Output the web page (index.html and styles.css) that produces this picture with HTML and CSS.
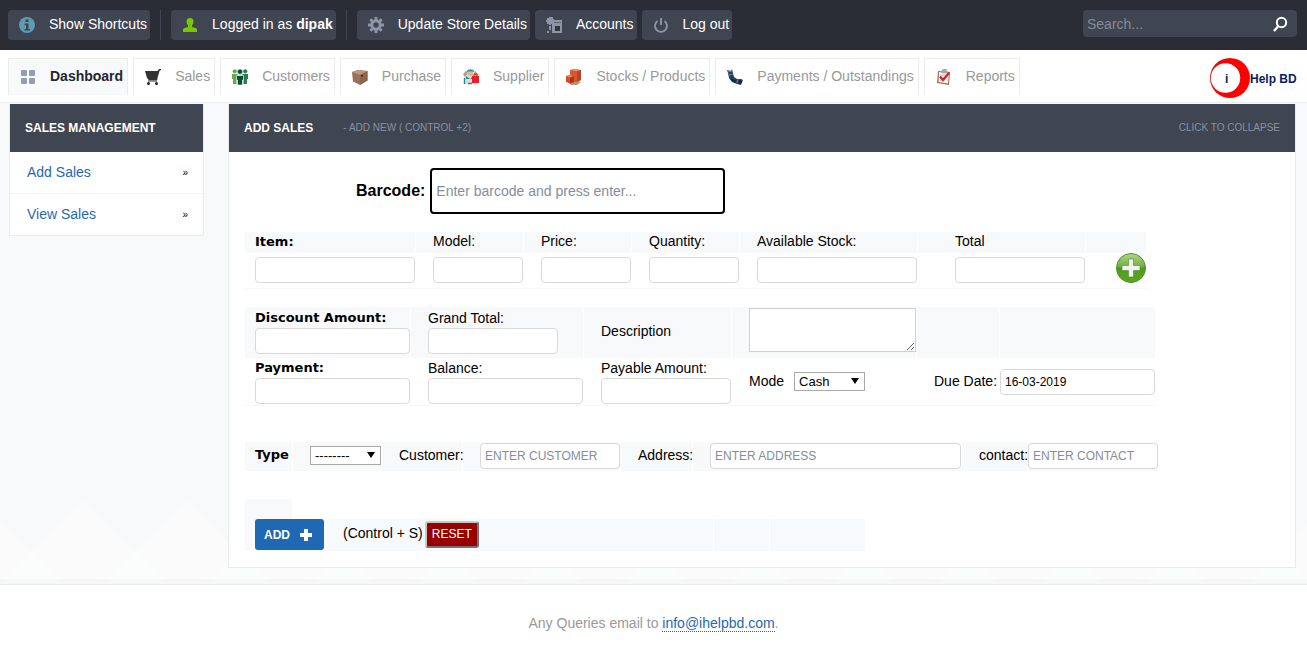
FILE: index.html
```html
<!DOCTYPE html>
<html lang="en">
<head>
<meta charset="utf-8">
<title>Add Sales</title>
<link rel="stylesheet" href="styles.css">
</head>
<body>
<header class="topbar">
  <a class="top-btn" href="#"><svg class="ico" viewBox="0 0 16 16"><circle cx="8" cy="8" r="8" fill="#5d9bb0"/><path d="M6.500 2.500h3v2.500h-3zM5.500 6.500h4V12H11v1.500H5.500V12H7V8H5.500z" fill="#3f4551"/></svg>Show Shortcuts</a>
  <span class="sep"></span>
  <a class="top-btn" href="#"><svg class="ico" viewBox="0 0 16 16"><path d="M8 1c2.200 0 3.700 1.500 3.500 3.700C11.400 6.500 10.500 7.600 10 8.300V10l3.500.9c1 .4 1.500 1 1.500 2V15H1v-2.100c0-1 .5-1.600 1.500-2L6 10V8.300C5.500 7.600 4.600 6.500 4.500 4.700 4.300 2.500 5.800 1 8 1z" fill="#7ac600"/></svg><span>Logged in as <b>dipak</b></span></a>
  <span class="sep"></span>
  <a class="top-btn" href="#"><svg class="ico" viewBox="0 0 16 16"><circle cx="8" cy="8" r="4.200" fill="none" stroke="#8d94a6" stroke-width="3"/><path d="M8 0v3.500M8 12.500V16M0 8h3.500M12.500 8H16M2.300 2.300l2.500 2.500M11.200 11.200l2.500 2.500M2.300 13.700l2.500-2.500M11.200 4.800l2.500-2.500" stroke="#8d94a6" stroke-width="3"/></svg>Update Store Details</a>
  <a class="top-btn" href="#"><svg class="ico" viewBox="0 0 16 16"><path d="M1 1h2V0h4v2h1v3l-2 2H5v1H3V7H1V5H0V3h1zM1 14h2v2H1zM3 9h2v4H3z" fill="#8d94a6"/><path d="M6 3h10v13H6z" fill="#8d94a6"/><path d="M8 5h7v1H8z" fill="#626878"/><path d="M9 9h5v5H9z" fill="#31353f"/></svg>Accounts</a>
  <a class="top-btn" href="#"><svg class="ico" viewBox="0 0 16 16"><path d="M4.500 4A6 6 0 1 0 11.500 4M8 1v7" fill="none" stroke="#8d94a6" stroke-width="1.900"/></svg>Log out</a>
  <form class="search">
    <input type="search" placeholder="Search..." aria-label="Search">
    <button type="button" aria-label="Run search"><svg class="ico" viewBox="0 0 16 16"><circle cx="9.500" cy="6.500" r="4.700" fill="none" stroke="#fff" stroke-width="2"/><path d="M6 10.500L2 15" stroke="#fff" stroke-width="2.400"/></svg></button>
  </form>
</header>

<nav class="mainnav">
  <a class="tab active" href="#"><svg class="ico" viewBox="0 0 16 16" fill="#969db0"><rect x="1" y="1" width="6" height="6" rx="1"/><rect x="9" y="1" width="6" height="6" rx="1"/><rect x="1" y="9" width="6" height="6" rx="1"/><rect x="9" y="9" width="6" height="6" rx="1"/></svg>Dashboard</a>
  <a class="tab" href="#"><svg class="ico" viewBox="0 0 16 16"><path d="M0 2h12.500L14 0h2v1.200h-1.200L12.500 9l-.3 2.200H3.500V10.500L2 9z" fill="#333"/><path d="M3 12h9" stroke="#333"/><circle cx="3.500" cy="14.500" r="1.500" fill="#222"/><circle cx="11.500" cy="14.500" r="1.500" fill="#222"/></svg>Sales</a>
  <a class="tab" href="#"><svg class="ico" viewBox="0 0 16 16"><g fill="#6aa84f"><circle cx="2.800" cy="2.300" r="2.100"/><path d="M0 5h5.500v5H4.500v5H1v-5H0z"/></g><g fill="#2f7d4c"><circle cx="13.200" cy="2.300" r="2.100"/><path d="M10.500 5H16v5h-1v5h-3.500v-5h-1z"/></g><g fill="#0b4f38" stroke="#fff" stroke-width=".6"><circle cx="8" cy="2.700" r="2.700"/><path d="M4.500 6.500h7V11h-1v5h-5v-5h-1z"/></g></svg>Customers</a>
  <a class="tab" href="#"><svg class="ico" viewBox="0 0 16 16"><path d="M0 3l6-2 9.500 1v9.500L8 16 1 12.500z" fill="#9b7259"/><path d="M0 3l6-2 9.500 1L8 6z" fill="#bf967a"/><path d="M8 6l7.500-4V11.500L8 16z" fill="#8c674f"/><path d="M9 6h2v1.500H9z" fill="#3d2419"/></svg>Purchase</a>
  <a class="tab" href="#"><svg class="ico" viewBox="0 0 16 16"><path d="M1 15V8l3-3h7l4 5v5z" fill="#e7d9c8"/><path d="M0 5l3-3 2 2-3 4zM12 2l3 3-1 3-3-3z" fill="#b79a84"/><circle cx="7.500" cy="4.500" r="2.800" fill="#e6b48d"/><path d="M3.500 3.500c0-4.500 8-4.500 8 0l-2-1h-4z" fill="#249aae"/><path d="M3 7l4 3 3-3 1 3H3z" fill="#238b9c"/><path d="M1.500 15V9M5 14.500h4" stroke="#238b9c" stroke-width="1.400"/><path d="M9 7h7v7H9z" fill="#e5202b"/><path d="M11 7V5h3v2" fill="none" stroke="#c5191e"/></svg>Supplier</a>
  <a class="tab" href="#"><svg class="ico" viewBox="0 0 16 16"><path d="M3 14l7-2 5 1-4 3H5z" fill="#b39a6a"/><path d="M4 1l5-1 6 1v10l-4 2H4z" fill="#d8552e"/><path d="M4 1l5-1 6 1-4 1.500z" fill="#f08c5c"/><path d="M11 2.500L15 1v10l-4 2z" fill="#b84526"/><path d="M0 7l4-1 4 1v6l-4 1.500L0 13z" fill="#d64b27"/><path d="M0 7l4-1 4 1-4 1.500z" fill="#f0885c"/><path d="M4 8.500L8 7v6l-4 1.500z" fill="#a93622"/></svg>Stocks / Products</a>
  <a class="tab" href="#"><svg class="ico" viewBox="0 0 16 16"><path d="M0 1l4 1 1-2 1 4 1 4 3 2 4 0 2 1-2 5-4-1-5-2-3-4-1-5z" fill="#263f5d"/><path d="M1 3l4-1M2 6l4-1M10 14l1-4" stroke="#8198b0" stroke-width=".8"/><path d="M4 9l5 3-1 2-4-3zM12 11l3 1-1 3-3-1z" fill="#15273e"/></svg>Payments / Outstandings</a>
  <a class="tab" href="#"><svg class="ico" viewBox="0 0 16 16"><path d="M2 2l12 1-1 13-12-2z" fill="#9b6e4c"/><path d="M3 3l10 1-1 10.500L2.500 13z" fill="#eef2f7"/><path d="M5 2l2-2h3l2 3-1 1.500-6-.5z" fill="#a8a8ad"/><path d="M4 6h7M4 9h6M4 11h5" stroke="#9db3c9" stroke-width=".7"/><path d="M4 7.500l3 3.500L13 4" fill="none" stroke="#d91f26" stroke-width="2.200"/></svg>Reports</a>
  <a class="logo" href="#" aria-label="i Help BD"><svg width="88" height="40" viewBox="0 0 88 40"><circle cx="20" cy="20" r="20" fill="#fe0000"/><circle cx="15.500" cy="20" r="14.700" fill="#fff"/><g class="logo-text"><text x="15" y="25">i</text><text x="40" y="25">Help BD</text></g></svg></a>
</nav>

<div class="stage">
  <svg class="pattern" aria-hidden="true"><defs><pattern id="peaks" x="31" y="0" width="104" height="84" patternUnits="userSpaceOnUse"><path d="M52 0l52 52v32H0V52z" fill="#fbfbfb"/><path d="M0 52l32 32H0zM104 52v32H72z" fill="#fbfdfc"/></pattern></defs><rect width="100%" height="84" fill="url(#peaks)"/><rect y="79" width="100%" height="5" fill="#000" fill-opacity=".018"/></svg>
  <aside class="side">
    <h2 class="panel-head">SALES MANAGEMENT</h2>
    <ul>
      <li><a href="#">Add Sales</a><span>»</span></li>
      <li><a href="#">View Sales</a><span>»</span></li>
    </ul>
  </aside>
  <main class="panel">
    <div class="panel-head"><h2>ADD SALES</h2><small>- ADD NEW ( CONTROL +2)</small><small class="collapse">CLICK TO COLLAPSE</small></div>
    <form class="panel-body">
      <div class="barcode"><label for="barcode">Barcode:</label><input id="barcode" placeholder="Enter barcode and press enter..."></div>

      <table class="items">
        <colgroup><col class="w171"><col class="w108"><col class="w108"><col class="w108"><col class="w178"><col class="w168"><col class="w60"></colgroup>
        <tr class="tint"><td><label class="strong" for="item">Item:</label></td><td><label for="model">Model:</label></td><td><label for="price">Price:</label></td><td><label for="qty">Quantity:</label></td><td><label for="stock">Available Stock:</label></td><td class="total"><label for="total">Total</label></td><td></td></tr>
        <tr class="line"><td><input id="item"></td><td><input id="model"></td><td><input id="price"></td><td><input id="qty"></td><td><input id="stock"></td><td class="total"><input id="total"></td><td class="plus-cell"><button class="plus" type="button" aria-label="Add item"><svg width="30" height="30" viewBox="0 0 30 30"><defs><linearGradient id="green" x2="0" y2="1"><stop offset="0" stop-color="#b4d68c"/><stop offset=".45" stop-color="#72ae43"/><stop offset=".5" stop-color="#4f9a22"/><stop offset="1" stop-color="#5ba71e"/></linearGradient></defs><circle cx="15" cy="15" r="14.500" fill="url(#green)" stroke="#4c8f2b"/><path d="M12.500 6h5v6.500H24v5h-6.500V24h-5v-6.500H6v-5h6.500z" fill="#f1f1f1" stroke="#4b8a2b" stroke-width=".6"/></svg></button></td></tr>
      </table>

      <table class="amounts">
        <colgroup><col class="w166"><col class="w173"><col class="w148"><col class="w185"><col class="w83"><col class="w155"></colgroup>
        <tr class="tint"><td><label class="strong" for="disc">Discount Amount:</label><input id="disc"></td><td><label for="grand">Grand Total:</label><input id="grand" class="w130"></td><td class="mid"><label for="desc">Description</label></td><td><textarea id="desc"></textarea></td><td></td><td></td></tr>
        <tr class="line"><td><label class="strong" for="pay">Payment:</label><input id="pay"></td><td><label for="bal">Balance:</label><input id="bal"></td><td><label for="payable">Payable Amount:</label><input id="payable"></td><td class="mid"><div class="mode"><label for="mode">Mode</label><span class="pick"><select id="mode"><option>Cash</option></select></span></div></td><td class="mid due"><label for="due">Due Date:</label></td><td class="mid flush"><input id="due" value="16-03-2019"></td></tr>
      </table>

      <table class="party">
        <colgroup><col class="w48"><col class="w89"><col class="w81"><col class="w158"><col class="w72"><col class="w269"><col class="w66"><col class="w130"></colgroup>
        <tr class="tint"><td><label class="strong" for="type">Type</label></td><td><span class="pick"><select id="type"><option>--------</option></select></span></td><td><label for="cust">Customer:</label></td><td><input id="cust" placeholder="ENTER CUSTOMER"></td><td><label for="addr">Address:</label></td><td><input id="addr" placeholder="ENTER ADDRESS"></td><td><label for="contact">contact:</label></td><td class="flush"><input id="contact" placeholder="ENTER CONTACT"></td></tr>
      </table>

      <div class="stub"></div>
      <table class="actions">
        <colgroup><col class="w81"><col class="w388"><col class="w56"><col class="w95"></colgroup>
        <tr class="tint"><td><button class="add" type="submit">ADD<svg width="12" height="12" viewBox="0 0 12 12"><path d="M4 0h4v4h4v4H8v4H4V8H0V4h4z" fill="#fff"/></svg></button></td><td><div class="reset-row">(Control + S)<button class="reset" type="reset">RESET</button></div></td><td></td><td></td></tr>
      </table>
    </form>
  </main>
</div>
<footer class="footer">Any Queries email to <a href="#">info@ihelpbd.com</a>.</footer>
</body>
</html>
```

FILE: styles.css
```css
* { box-sizing: border-box; }
body { margin: 0; background: #fff; color: #000; font: 14px/20px "Liberation Sans", Arial, sans-serif; }
a { text-decoration: none; color: #1f68b4; }
h2 { margin: 0; font-size: 12px; line-height: 20px; }
.ico { width: 16px; height: 16px; flex: none; }

.topbar { display: flex; align-items: flex-start; height: 50px; padding: 10px 10px 0 8px; background: #2a2d36; }
.top-btn { display: flex; align-items: center; height: 30px; margin-right: 5px; padding: 0 3px 2px 11px; border-radius: 4px; background: #3f4551; color: #fff; white-space: nowrap; }
.top-btn .ico { margin: 2px 14px 0 0; }
.sep { width: 1px; height: 30px; margin: 0 10px 0 5px; background: #3f4551; }
.search { display: flex; align-items: center; width: 214px; height: 27px; margin-left: auto; padding: 0 9px 0 4px; border-radius: 4px; background: #3f4551; }
.search input { flex: 1; min-width: 0; height: 25px; padding: 0; border: 0; background: none; color: #fff; font: inherit; }
.search input::placeholder { color: #858b99; }
.search button { display: flex; padding: 0; border: 0; background: none; }

.mainnav { display: flex; gap: 5px; align-items: flex-start; height: 53px; padding: 8px 9px 0 8px; border-bottom: 1px solid #e9eeec; }
.tab { display: flex; align-items: center; height: 37px; padding: 0 4px 2px 11px; border: 1px solid #ececec; border-bottom: 0; color: #999; white-space: nowrap; }
.tab .ico { margin: 2px 14px 0 0; }
.tab.active { background: #f7f9fb; color: #23262e; font-weight: bold; }
.logo { display: flex; margin-left: auto; }
.logo-text { fill: #0b1c62; font: bold 12px "Liberation Sans", Arial, sans-serif; }

.stage { position: relative; display: flex; align-items: flex-start; gap: 24px; padding: 1px 11px 16px 9px; border-bottom: 1px solid #e9eceb; background: #f7f9fb; }
.pattern { position: absolute; left: 0; bottom: 0; width: 100%; height: 84px; }
.side, .panel { position: relative; border: 1px solid #e9eced; border-top: 0; background: #fff; }
.side { width: 195px; flex: none; }
.panel { flex: 1; }
.panel-head { display: flex; align-items: center; height: 48px; padding: 0 15px; background: #3f4551; color: #fff; }
.panel-head small { margin-left: 30px; color: #8a91a0; font-size: 10px; }
.panel-head .collapse { margin-left: auto; }
.side ul { margin: 0; padding: 0; list-style: none; }
.side li { display: flex; justify-content: space-between; height: 42px; padding: 10px 15px 0 17px; border-bottom: 1px solid #f3f5f6; }
.side li:last-child { border-bottom: 0; height: 41px; }
.side li span { font-size: 10px; line-height: 22px; }

.panel-body { padding: 16px 16px; }
.barcode { display: flex; align-items: center; gap: 5px; padding-left: 111px; font-size: 16px; font-weight: bold; }
.panel-body input { display: block; width: 100%; height: 26px; padding: 0 4px; border: 1px solid #d9d9d9; border-radius: 4px; background: #fff; font: 12px "Liberation Sans", Arial, sans-serif; }
.panel-body input::placeholder { color: #858d9c; }
.panel-body .barcode input { width: 295px; height: 46px; border: 2px solid #000; font-size: 14px; }
.barcode label { padding-bottom: 1px; }

table { border-collapse: separate; border-spacing: 0; table-layout: fixed; }
td { padding: 0 0 0 17px; border-right: 1px solid #fff; vertical-align: top; white-space: nowrap; }
td:first-child { padding-left: 10px; }
td:last-child { border-right: 0; }
td.mid { vertical-align: middle; }
td.flush { padding-left: 0; }
label { display: block; line-height: 20px; }
.strong { font-family: "DejaVu Sans", Verdana, sans-serif; font-weight: bold; font-size: 13px; }
.tint td { background: #f7f9fb; }
.line td { border-bottom: 1px solid #f6f7f8; }

.items { width: 901px; margin-top: 18px; }
.items .tint td { height: 21px; line-height: 20px; }
.items label { line-height: 19px; }
.items .line td { height: 36px; padding-top: 4px; }
.items td.total { padding-left: 37px; }
.items .line .plus-cell { padding: 0 0 0 30px; }
.plus { display: flex; padding: 0; border: 0; background: none; }

.amounts { width: 910px; margin-top: 18px; }
.amounts .tint td { height: 51px; padding-top: 1px; }
.amounts .tint td.mid { padding-bottom: 5px; }
.amounts .line td { height: 48px; }
.amounts td.due { padding-right: 5px; text-align: right; }
.mode label, .due label { padding-bottom: 2px; }
.panel-body input.w130 { width: 130px; }
textarea { display: block; width: 167px; height: 44px; border: 1px solid #d0d0d0; background: #fff; }
.mode { display: flex; align-items: center; gap: 10px; }
.pick { position: relative; display: block; width: 71px; }
.pick::after { content: ""; position: absolute; right: 6px; top: 6px; border: 4px solid transparent; border-top: 6px solid #000; border-bottom: 0; pointer-events: none; }
select { display: block; width: 71px; height: 19px; padding: 0 4px; border: 1px solid #a9a9a9; border-radius: 0; background: #fff; color: #000; font: 13px "Liberation Sans", Arial, sans-serif; appearance: none; }

.party { width: 913px; margin-top: 36px; }
.party td { height: 29px; padding-bottom: 2px; vertical-align: middle; }
.party label { padding-bottom: 2px; }

.stub { width: 47px; height: 20px; margin-top: 28px; background: #f7f9fb; }
.actions { width: 620px; }
.actions td { height: 32px; }
.add { display: flex; align-items: center; gap: 10px; width: 69px; height: 31px; padding: 0 9px; border: 0; border-radius: 3px; background: #1f68b4; color: #fff; font: bold 12px "Liberation Sans", Arial, sans-serif; }
.reset-row { display: flex; align-items: flex-start; gap: 2px; line-height: 28px; }
.reset { height: 27px; margin-top: 2px; padding: 0 5px 2px; border: 2px outset #c8c8c8; border-radius: 3px; background: #900; color: #fff; font: 12px "Liberation Sans", Arial, sans-serif; }

.footer { padding: 28px 0; text-align: center; color: #999; }
.footer a { border-bottom: 1px dotted #1f68b4; }

.w48 { width: 48px; } .w56 { width: 56px; } .w60 { width: 60px; } .w66 { width: 66px; }
.w72 { width: 72px; } .w81 { width: 81px; } .w83 { width: 83px; } .w89 { width: 89px; }
.w95 { width: 95px; } .w108 { width: 108px; } .w148 { width: 148px; } .w155 { width: 155px; }
.w158 { width: 158px; } .w166 { width: 166px; } .w168 { width: 168px; } .w171 { width: 171px; }
.w173 { width: 173px; } .w178 { width: 178px; } .w185 { width: 185px; } .w269 { width: 269px; }
.w388 { width: 388px; } col.w130 { width: 130px; }
```
